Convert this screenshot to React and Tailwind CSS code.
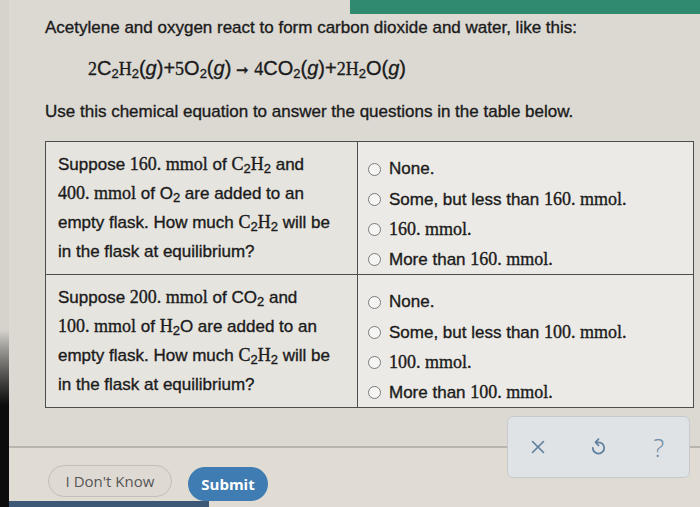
import { X } from "lucide-react";

const serif = "font-['Liberation_Serif','Times_New_Roman',serif] text-[18px]";

function S({ children }) {
  return <span className={serif}>{children}</span>;
}

function Sub({ children }) {
  return <sub className="text-[13px]">{children}</sub>;
}

function Radio({ children }) {
  return (
    <div className="flex items-center h-[30px]">
      <span className="w-[13px] h-[13px] rounded-full border border-[#7b7b7b] bg-[#f5f5f3] mr-[8px] shrink-0" />
      <span>{children}</span>
    </div>
  );
}

function UndoIcon() {
  return (
    <svg width="21" height="21" viewBox="0 0 24 24" fill="none" stroke="#5f7f9e" strokeWidth="2" strokeLinecap="round" strokeLinejoin="round">
      <path d="M9 6h3a6.5 6.5 0 1 1-6.5 6.5" />
      <path d="M12 2.5 8.5 6l3.5 3.5" />
    </svg>
  );
}

export default function App() {
  return (
    <div className="w-[700px] h-[507px] overflow-hidden bg-[#dcd9d3] flex font-['Liberation_Sans',Arial,sans-serif] text-[#1b1b1b] text-[17px] [-webkit-text-stroke:0.35px_#1b1b1b]">
      {/* dark edge of the monitor */}
      <div className="w-[9px] shrink-0 bg-linear-to-b from-[#d6d3cd] from-65% to-[#0c0c0c] to-80%" />

      <div className="flex-1 flex flex-col">
        {/* teal header */}
        <div className="h-[18px] flex">
          <div className="ml-[341px] flex-1 bg-[#2f8a70]" />
        </div>

        <div className="pl-[36px] pr-[6px]">
          <p className="mt-[2px] leading-[24px]">
            Acetylene and oxygen react to form carbon dioxide and water, like this:
          </p>

          <p className="mt-[16px] pl-[43px] leading-[24px] text-[20px]">
            <S>2</S>C<Sub>2</Sub><S>H</S><Sub>2</Sub>(<i>g</i>)+<S>5</S>O<Sub>2</Sub>(<i>g</i>)
            <span className="mx-[5px] text-[15px]">&#10142;</span>
            <S>4</S>CO<Sub>2</Sub>(<i>g</i>)+<S>2H</S><Sub>2</Sub>O(<i>g</i>)
          </p>

          <p className="mt-[18px] leading-[24px]">
            Use this chemical equation to answer the questions in the table below.
          </p>

          {/* question table */}
          <div className="mt-[17px] grid grid-cols-[312px_1fr] border border-[#4d4d4d] bg-[#eceae6]">
            <div className="border-r border-b border-[#4d4d4d] bg-[#e6e4df] px-[12px] py-[8px] leading-[29px]">
              <div>
                Suppose <S>160. mmol</S> of <S>C</S><Sub>2</Sub><S>H</S><Sub>2</Sub> and
              </div>
              <div>
                <S>400. mmol</S> of O<Sub>2</Sub> are added to an
              </div>
              <div>
                empty flask. How much <S>C</S><Sub>2</Sub><S>H</S><Sub>2</Sub> will be
              </div>
              <div>in the flask at equilibrium?</div>
            </div>
            <div className="border-b border-[#4d4d4d] pl-[10px] pt-[12px]">
              <Radio>None.</Radio>
              <Radio>
                Some, but less than <S>160. mmol.</S>
              </Radio>
              <Radio>
                <S>160. mmol.</S>
              </Radio>
              <Radio>
                More than <S>160. mmol.</S>
              </Radio>
            </div>

            <div className="border-r border-[#4d4d4d] bg-[#e6e4df] px-[12px] py-[8px] leading-[29px]">
              <div>
                Suppose <S>200. mmol</S> of CO<Sub>2</Sub> and
              </div>
              <div>
                <S>100. mmol</S> of <S>H</S><Sub>2</Sub>O are added to an
              </div>
              <div>
                empty flask. How much <S>C</S><Sub>2</Sub><S>H</S><Sub>2</Sub> will be
              </div>
              <div>in the flask at equilibrium?</div>
            </div>
            <div className="pl-[10px] pt-[12px]">
              <Radio>None.</Radio>
              <Radio>
                Some, but less than <S>100. mmol.</S>
              </Radio>
              <Radio>
                <S>100. mmol.</S>
              </Radio>
              <Radio>
                More than <S>100. mmol.</S>
              </Radio>
            </div>
          </div>

          {/* tool panel */}
          <div className="flex justify-end mt-[8px] mb-[-32px] relative z-10 [-webkit-text-stroke:0px]">
            <div className="w-[183px] h-[62px] mr-[4px] rounded-md border border-[#c6cacd] bg-[#dfe3e5] grid grid-cols-3 items-center justify-items-center">
              <X size={22} strokeWidth={1.75} color="#5f7f9e" />
              <UndoIcon />
              <span className="text-[26px] font-light text-[#6e8ba7] font-['Open_Sans',sans-serif]">?</span>
            </div>
          </div>
        </div>

        {/* footer */}
        <div className="flex-1 border-t-2 border-[#b8b5ae] bg-[#e0dcd4] flex flex-col [-webkit-text-stroke:0px]">
          <div className="flex items-center gap-[16px] pl-[39px] pt-[13px] font-['Open_Sans',sans-serif]">
            <button className="w-[124px] h-[32px] rounded-full border border-[#c2bfb9] bg-[#dedad3] text-[15px] text-[#555]">
              I Don't Know
            </button>
            <button className="w-[80px] h-[34px] mt-[6px] rounded-full bg-[#3e7cb1] text-[15px] font-bold text-white">
              Submit
            </button>
          </div>
          <div className="mt-auto h-[6px] w-[200px] bg-[#3d5876]" />
        </div>
      </div>
    </div>
  );
}
